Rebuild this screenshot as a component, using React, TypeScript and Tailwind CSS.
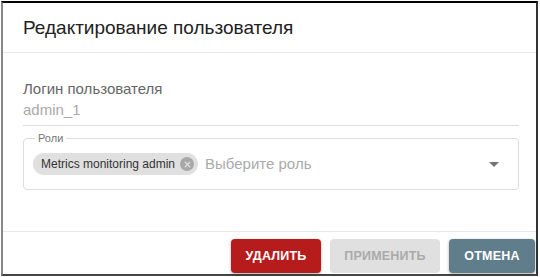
import { X } from "lucide-react";

export default function App() {
  return (
    <div className="h-[277px] w-[540px] bg-white p-px" style={{ fontFamily: '"Liberation Sans", Arial, sans-serif' }}>
      <div className="flex h-[275px] w-[537px] flex-col border-b-2 border-l-2 border-r-2 border-t-2 border-b-[#444] border-l-[#888] border-r-[#333] border-t-black bg-white">
        <div className="flex h-[50px] items-center border-b border-[#e8e8e8] px-[20px]">
          <h1 className="text-[19px] leading-none text-[#222]">Редактирование пользователя</h1>
        </div>

        <div className="flex-1 px-[20px] pt-[25px]">
          <div className="w-[496px] border-b border-[#ddd] pb-[5px]">
            <p className="text-[15px] leading-[21px] text-[#666]">Логин пользователя</p>
            <p className="text-[15px] leading-[21px] text-[#aaa]">admin_1</p>
          </div>

          <fieldset className="mt-[7px] h-[57px] w-[496px] rounded-[4px] border border-[#ddd] px-[9px]">
            <legend className="ml-[2px] px-[3px] text-[11px] leading-[11px] text-[#777]">Роли</legend>
            <div className="mt-[9px] flex items-center">
              <span className="flex h-[22px] items-center gap-[5px] rounded-full bg-[#e0e0e0] pl-[8px] pr-[4px] text-[12px] text-[#333]">
                Metrics monitoring admin
                <span className="flex h-[14px] w-[14px] items-center justify-center rounded-full bg-[#a8a8a8]">
                  <X className="h-[9px] w-[9px] text-[#e0e0e0]" strokeWidth={3.5} />
                </span>
              </span>
              <span className="ml-[7px] text-[15px] text-[#aaa]">Выберите роль</span>
              <svg className="ml-auto mr-[10px]" width="10" height="5" viewBox="0 0 10 5">
                <path d="M0 0 L10 0 L5 5 Z" fill="#757575" />
              </svg>
            </div>
          </fieldset>
        </div>

        <div className="flex h-[43px] items-start justify-end gap-[9px] border-t border-[#e8e8e8] pr-[1px] pt-[7px]">
          <button className="h-[34px] w-[90px] rounded-[4px] bg-[#b71c1c] text-[12.5px] font-bold tracking-[0.2px] text-white shadow-[0_1px_3px_rgba(0,0,0,0.35)]">
            УДАЛИТЬ
          </button>
          <button className="h-[34px] w-[110px] rounded-[4px] bg-[#e0e0e0] text-[12.5px] font-bold tracking-[0.2px] text-[#aaa]">
            ПРИМЕНИТЬ
          </button>
          <button className="h-[34px] w-[86px] rounded-[4px] bg-[#607d8b] text-[12.5px] font-bold tracking-[0.2px] text-white shadow-[0_1px_3px_rgba(0,0,0,0.35)]">
            ОТМЕНА
          </button>
        </div>
      </div>
    </div>
  );
}
